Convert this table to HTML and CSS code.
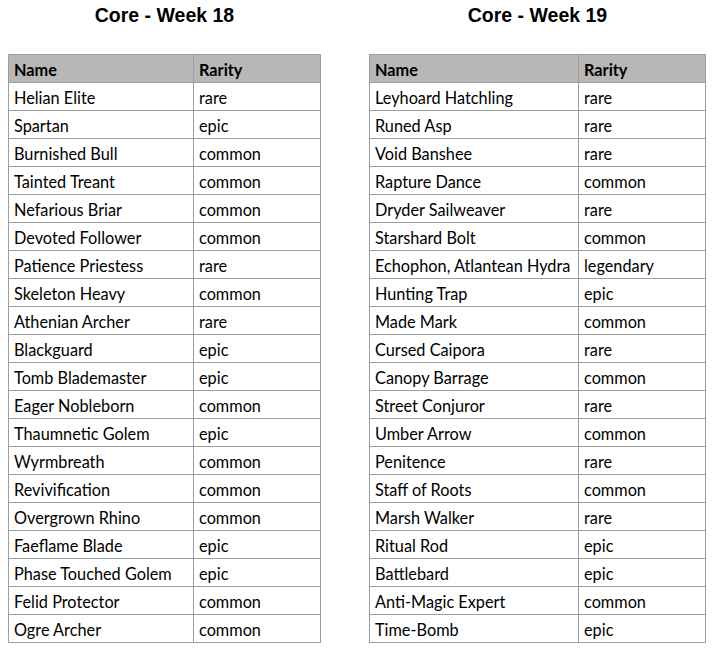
FILE: index.html
```html
<!DOCTYPE html>
<html>
<head>
<meta charset="utf-8">
<link rel="stylesheet" href="styles.css">
</head>
<body>
<div class="page">
  <section class="week">
    <h2 class="title">Core - Week 18</h2>
    <table class="cards narrow">
      <colgroup><col class="c-name"><col class="c-rarity"></colgroup>
      <thead><tr><th>Name</th><th>Rarity</th></tr></thead>
      <tbody>
        <tr><td>Helian Elite</td><td>rare</td></tr>
        <tr><td>Spartan</td><td>epic</td></tr>
        <tr><td>Burnished Bull</td><td>common</td></tr>
        <tr><td>Tainted Treant</td><td>common</td></tr>
        <tr><td>Nefarious Briar</td><td>common</td></tr>
        <tr><td>Devoted Follower</td><td>common</td></tr>
        <tr><td>Patience Priestess</td><td>rare</td></tr>
        <tr><td>Skeleton Heavy</td><td>common</td></tr>
        <tr><td>Athenian Archer</td><td>rare</td></tr>
        <tr><td>Blackguard</td><td>epic</td></tr>
        <tr><td>Tomb Blademaster</td><td>epic</td></tr>
        <tr><td>Eager Nobleborn</td><td>common</td></tr>
        <tr><td>Thaumnetic Golem</td><td>epic</td></tr>
        <tr><td>Wyrmbreath</td><td>common</td></tr>
        <tr><td>Revivification</td><td>common</td></tr>
        <tr><td>Overgrown Rhino</td><td>common</td></tr>
        <tr><td>Faeflame Blade</td><td>epic</td></tr>
        <tr><td>Phase Touched Golem</td><td>epic</td></tr>
        <tr><td>Felid Protector</td><td>common</td></tr>
        <tr><td>Ogre Archer</td><td>common</td></tr>
      </tbody>
    </table>
  </section>
  <section class="week">
    <h2 class="title">Core - Week 19</h2>
    <table class="cards wide">
      <colgroup><col class="c-name"><col class="c-rarity"></colgroup>
      <thead><tr><th>Name</th><th>Rarity</th></tr></thead>
      <tbody>
        <tr><td>Leyhoard Hatchling</td><td>rare</td></tr>
        <tr><td>Runed Asp</td><td>rare</td></tr>
        <tr><td>Void Banshee</td><td>rare</td></tr>
        <tr><td>Rapture Dance</td><td>common</td></tr>
        <tr><td>Dryder Sailweaver</td><td>rare</td></tr>
        <tr><td>Starshard Bolt</td><td>common</td></tr>
        <tr><td>Echophon, Atlantean Hydra</td><td>legendary</td></tr>
        <tr><td>Hunting Trap</td><td>epic</td></tr>
        <tr><td>Made Mark</td><td>common</td></tr>
        <tr><td>Cursed Caipora</td><td>rare</td></tr>
        <tr><td>Canopy Barrage</td><td>common</td></tr>
        <tr><td>Street Conjuror</td><td>rare</td></tr>
        <tr><td>Umber Arrow</td><td>common</td></tr>
        <tr><td>Penitence</td><td>rare</td></tr>
        <tr><td>Staff of Roots</td><td>common</td></tr>
        <tr><td>Marsh Walker</td><td>rare</td></tr>
        <tr><td>Ritual Rod</td><td>epic</td></tr>
        <tr><td>Battlebard</td><td>epic</td></tr>
        <tr><td>Anti-Magic Expert</td><td>common</td></tr>
        <tr><td>Time-Bomb</td><td>epic</td></tr>
      </tbody>
    </table>
  </section>
</div>
</body>
</html>
```
FILE: styles.css
```css
html, body {
  margin: 0;
  padding: 0;
  background: #ffffff;
}
.page {
  display: flex;
  align-items: flex-start;
  gap: 48px;
  padding-left: 8px;
}
.week {
  display: flex;
  flex-direction: column;
}
.title {
  margin: 0 0 24px 0;
  height: 30px;
  line-height: 30px;
  text-align: center;
  font-family: "Liberation Sans", Arial, sans-serif;
  font-weight: bold;
  font-size: 19.5px;
  color: #000;
}
.cards {
  border-collapse: collapse;
  table-layout: fixed;
  font-family: Lato, "Open Sans", sans-serif;
  font-size: 16.3px;
  color: #000;
}
.narrow { width: 312px; }
.wide { width: 336px; }
.narrow .c-name { width: 185px; }
.wide .c-name { width: 209px; }
.c-rarity { width: 127px; }
.cards th,
.cards td {
  border: 1px solid #9e9e9e;
  height: 28px;
  box-sizing: border-box;
  padding: 2px 4px 0 5px;
  text-align: left;
  vertical-align: middle;
  white-space: nowrap;
  overflow: hidden;
}
.cards th {
  background: #b7b7b7;
  font-weight: bold;
}
```
